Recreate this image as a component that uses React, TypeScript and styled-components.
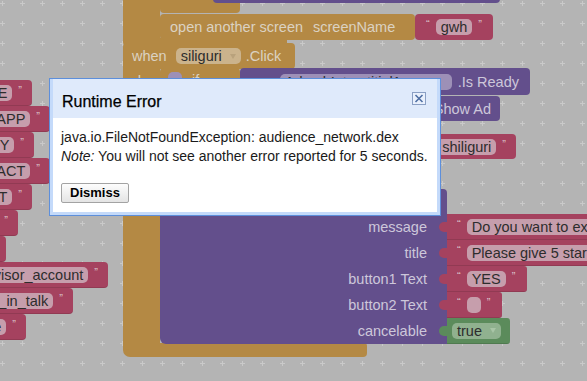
import styled, { createGlobalStyle } from "styled-components";

type Tone = "orange" | "purple" | "pink" | "green";

const fill: Record<Tone, string> = {
  orange: "#b48944",
  purple: "#634f8c",
  pink: "#a5425f",
  green: "#5b8b5b",
};

const ink: Record<Tone, string> = {
  orange: "#dbd2c2",
  purple: "#cdc7da",
  pink: "#dcc3cc",
  green: "#cfe0cf",
};

const pillFill: Record<Tone, string> = {
  orange: "#cbb38c",
  purple: "#9d90b7",
  pink: "#c69eac",
  green: "#90b18f",
};

const caretFill: Record<Tone, string> = {
  orange: "#b9a27c",
  purple: "#8a7ea6",
  pink: "#b48a99",
  green: "#a9c5a7",
};

const GlobalStyle = createGlobalStyle`
  html, body {
    margin: 0;
    padding: 0;
    background: #b4b4b4;
  }
  body {
    font-family: "Liberation Sans", Arial, sans-serif;
  }
`;

const leftItems = [
  { y: 80, w: 32, text: "RATE" },
  { y: 106, w: 50, text: "SHARE_APP" },
  { y: 132, w: 34, text: "PRIVACY" },
  { y: 158, w: 50, text: "CONTACT" },
  { y: 184, w: 32, text: "ABOUT" },
  { y: 210, w: 18, text: "more" },
  { y: 236, w: 6, text: "" },
  { y: 262, w: 108, text: "advisor_account" },
  { y: 288, w: 73, text: "join_in_talk" },
  { y: 314, w: 26, text: "share" },
];

const sockets: { label: string; tone: Tone; w: number; text: string; closed?: boolean }[] = [
  { label: "message", tone: "pink", w: 200, text: "Do you want to exit?" },
  { label: "title", tone: "pink", w: 200, text: "Please give 5 star rating" },
  { label: "button1 Text", tone: "pink", w: 80, text: "YES", closed: true },
  { label: "button2 Text", tone: "pink", w: 55, text: "", closed: true },
  { label: "cancelable", tone: "green", w: 63, text: "true" },
];

const App = () => {
  return (
    <Workspace>
      <GlobalStyle />
      <Grid width="587" height="381">
        <defs>
          <pattern id="dots" width="20" height="20" patternUnits="userSpaceOnUse">
            <rect x="0" y="3" width="5" height="1" fill="#c9c9c9" />
            <rect x="2" y="1" width="1" height="5" fill="#c9c9c9" />
          </pattern>
        </defs>
        <rect width="587" height="381" fill="url(#dots)" />
      </Grid>

      {leftItems.map((item) => (
        <Block key={item.y} $tone="pink" $x={-40} $y={item.y} $w={item.w + 40} $h={26} $pad={10} $gap={6} $end $square>
          {item.text && (
            <>
              <Pill $tone="pink">{item.text}</Pill>
              <Quote>”</Quote>
            </>
          )}
        </Block>
      ))}

      {/* blocks above the when event */}
      <Block $tone="orange" $x={123} $y={-30} $w={37} $h={78} $round="0 0 0 7px" />
      <Block $tone="orange" $x={123} $y={38} $w={164} $h={10} $round="0 0 4px 7px" />
      <Block $tone="orange" $x={160} $y={-20} $w={80} $h={33} />
      <Block $tone="purple" $x={213} $y={-20} $w={287} $h={23} />
      <Block $tone="orange" $x={160} $y={14} $w={255} $h={26} $pad={10}>
        <Word>open another screen</Word>
        <Word $gap={10}>screenName</Word>
      </Block>
      <Block $tone="pink" $x={415} $y={14} $w={78} $h={26} $pad={11} $gap={6}>
        <Quote>“</Quote>
        <Pill $tone="pink">gwh</Pill>
        <Quote>”</Quote>
      </Block>

      {/* when siliguri.Click */}
      <Block $tone="orange" $x={123} $y={343} $w={244} $h={14} $round="0 3px 4px 7px" />
      <Block $tone="orange" $x={123} $y={60} $w={37} $h={290} $round="0 0 0 7px" />
      <Block $tone="orange" $x={123} $y={43} $w={172} $h={26} $pad={9}>
        <Word>when</Word>
        <Pill $tone="orange" style={{ marginLeft: 9 }}>
          siliguri
          <Caret $tone="orange" />
        </Pill>
        <Word $gap={5}>.Click</Word>
      </Block>
      <DoLabel>do</DoLabel>

      <Block $tone="orange" $x={160} $y={68} $w={80} $h={60} $pad={8} $top>
        <Pill $tone="purple" style={{ width: 4 }} />
        <Word $gap={10}>if</Word>
      </Block>
      <Block $tone="purple" $x={240} $y={68} $w={290} $h={27} $pad={11} $end>
        <Pill $tone="purple" style={{ width: 162 }}>
          AdmobInterstitial1
          <Caret $tone="purple" />
        </Pill>
        <Word $gap={6}>.Is Ready</Word>
      </Block>
      <Block $tone="purple" $x={200} $y={96} $w={300} $h={25} $pad={9} $end>
        <Word>call AdmobInterstitial1 .Show Ad</Word>
      </Block>
      <Block $tone="pink" $x={380} $y={134} $w={136} $h={25} $pad={10} $gap={6} $end>
        <Pill $tone="pink">shiliguri</Pill>
        <Quote>”</Quote>
      </Block>

      <Notifier>
        <NotifierHead>call Notifier1 .ShowChooseDialog</NotifierHead>
        {sockets.map((s, i) => (
          <NotifierRow key={s.label}>
            <ArgLabel $last={i === sockets.length - 1}>{s.label}</ArgLabel>
            <Socket $tone={s.tone} $w={s.w}>
              {s.tone === "green" ? (
                <Pill $tone="green">
                  {s.text}
                  <Caret $tone="green" />
                </Pill>
              ) : (
                <>
                  <Quote>“</Quote>
                  <Pill $tone="pink" style={s.text ? undefined : { width: 4 }}>
                    {s.text}
                  </Pill>
                  {s.closed && <Quote>”</Quote>}
                </>
              )}
            </Socket>
          </NotifierRow>
        ))}
      </Notifier>

      <Dialog>
        <Caption>
          <Title>Runtime Error</Title>
          <CloseBox>
            <svg width="12" height="11" viewBox="0 0 12 11">
              <path d="M2.5 2 L9.5 9 M9.5 2 L2.5 9" stroke="#4f6fa3" strokeWidth="1.6" />
            </svg>
          </CloseBox>
        </Caption>
        <Body>
          <Line>java.io.FileNotFoundException: audience_network.dex</Line>
          <Line>
            <em>Note:</em> You will not see another error reported for 5 seconds.
          </Line>
          <Dismiss>Dismiss</Dismiss>
        </Body>
      </Dialog>
    </Workspace>
  );
};

export default App;

const Workspace = styled.div`
  position: relative;
  width: 587px;
  height: 381px;
  overflow: hidden;
  background: #b4b4b4;
  font-family: "Liberation Sans", Arial, sans-serif;
`;

const Grid = styled.svg`
  position: absolute;
  left: 0;
  top: 0;
  display: block;
`;

const Block = styled.div<{
  $x: number;
  $y: number;
  $w: number;
  $h: number;
  $tone: Tone;
  $pad?: number;
  $gap?: number;
  $end?: boolean;
  $top?: boolean;
  $square?: boolean;
  $round?: string;
}>`
  position: absolute;
  left: ${(p) => p.$x}px;
  top: ${(p) => p.$y}px;
  width: ${(p) => p.$w}px;
  height: ${(p) => p.$h}px;
  box-sizing: border-box;
  display: flex;
  align-items: ${(p) => (p.$top ? "flex-start" : "center")};
  justify-content: ${(p) => (p.$end ? "flex-end" : "flex-start")};
  gap: ${(p) => p.$gap ?? 0}px;
  padding: ${(p) => (p.$top ? 4 : 0)}px ${(p) => p.$pad ?? 10}px 0;
  background: ${(p) => fill[p.$tone]};
  color: ${(p) => ink[p.$tone]};
  border-radius: ${(p) => p.$round ?? (p.$square ? "0 4px 4px 0" : "4px")};
  border-bottom: ${(p) => (p.$square ? "1px solid rgba(0,0,0,0.12)" : "none")};
  font-size: 14.5px;
  white-space: nowrap;
`;

const Word = styled.span<{ $gap?: number }>`
  flex-shrink: 0;
  margin-left: ${(p) => p.$gap ?? 0}px;
`;

const Pill = styled.span<{ $tone: Tone }>`
  flex-shrink: 0;
  display: inline-flex;
  align-items: center;
  gap: 8px;
  height: 16px;
  padding: 0 5px;
  border-radius: 5px;
  background: ${(p) => pillFill[p.$tone]};
  color: #2d2d2d;
  font-size: 14.5px;
  line-height: 16px;
`;

const Caret = styled.span<{ $tone: Tone }>`
  width: 0;
  height: 0;
  border-left: 3.5px solid transparent;
  border-right: 3.5px solid transparent;
  border-top: 5px solid ${(p) => caretFill[p.$tone]};
`;

const Quote = styled.span`
  flex-shrink: 0;
  align-self: flex-start;
  margin-top: 5px;
  font-size: 11px;
  line-height: 1;
  color: #dcc3cc;
`;

const DoLabel = styled.span`
  position: absolute;
  left: 133px;
  top: 73px;
  font-size: 14.5px;
  color: ${ink.orange};
`;

const Notifier = styled.div`
  position: absolute;
  left: 160px;
  top: 189px;
  display: flex;
  flex-direction: column;
  font-size: 14.5px;
  white-space: nowrap;
`;

const NotifierHead = styled.div`
  width: 287px;
  height: 25px;
  box-sizing: border-box;
  padding-left: 10px;
  display: flex;
  align-items: center;
  background: ${fill.purple};
  color: ${ink.purple};
  border-radius: 4px 4px 0 0;
`;

const NotifierRow = styled.div`
  display: flex;
  height: 26px;
`;

const ArgLabel = styled.div<{ $last?: boolean }>`
  width: 287px;
  box-sizing: border-box;
  padding-right: 20px;
  display: flex;
  align-items: center;
  justify-content: flex-end;
  background: ${fill.purple};
  color: ${ink.purple};
  border-radius: ${(p) => (p.$last ? "0 0 0 6px" : "0")};
`;

const Socket = styled.div<{ $tone: Tone; $w: number }>`
  position: relative;
  width: ${(p) => p.$w}px;
  box-sizing: border-box;
  display: flex;
  align-items: center;
  gap: 6px;
  padding-left: ${(p) => (p.$tone === "green" ? 5 : 10)}px;
  background: ${(p) => fill[p.$tone]};
  border-bottom: 1px solid rgba(0, 0, 0, 0.12);
  border-radius: 0 3px 3px 0;

  &::before {
    content: "";
    position: absolute;
    left: -8px;
    top: 8px;
    width: 8px;
    height: 10px;
    background: ${(p) => fill[p.$tone]};
    border-radius: 5px 0 0 5px;
  }
`;

const Dialog = styled.div`
  position: absolute;
  left: 49px;
  top: 78px;
  width: 392px;
  box-sizing: border-box;
  border: 1px solid #5d8fdb;
  background: #c4dafa;
  padding: 0 3px 3px;
  font-family: "Liberation Sans", Arial, sans-serif;
`;

const Caption = styled.div`
  height: 39px;
  box-sizing: border-box;
  padding: 6px 11px 0 9px;
  display: flex;
  align-items: center;
  justify-content: space-between;
  background: #dfeafb;
`;

const Title = styled.span`
  font-size: 16px;
  color: #000;
  -webkit-text-stroke: 0.25px #000;
`;

const CloseBox = styled.span`
  align-self: flex-start;
  margin-top: 7px;
  width: 14px;
  height: 13px;
  box-sizing: border-box;
  border: 1px solid #8a9fc4;
  background: #e9f0fc;
  display: flex;
  align-items: center;
  justify-content: center;
`;

const Body = styled.div`
  height: 94px;
  box-sizing: border-box;
  padding: 10px 8px 0;
  background: #fff;
  font-size: 14px;
  line-height: 19px;
  color: #1a1a1a;
`;

const Line = styled.div`
  white-space: nowrap;
`;

const Dismiss = styled.button`
  margin-top: 17px;
  height: 20px;
  padding: 0 8px;
  border: 1px solid #a3a3a3;
  border-radius: 2px;
  background: linear-gradient(#fdfdfd, #e4e4e4);
  font-family: "Liberation Sans", Arial, sans-serif;
  font-size: 13px;
  font-weight: bold;
  color: #000;
  line-height: 18px;
`;
